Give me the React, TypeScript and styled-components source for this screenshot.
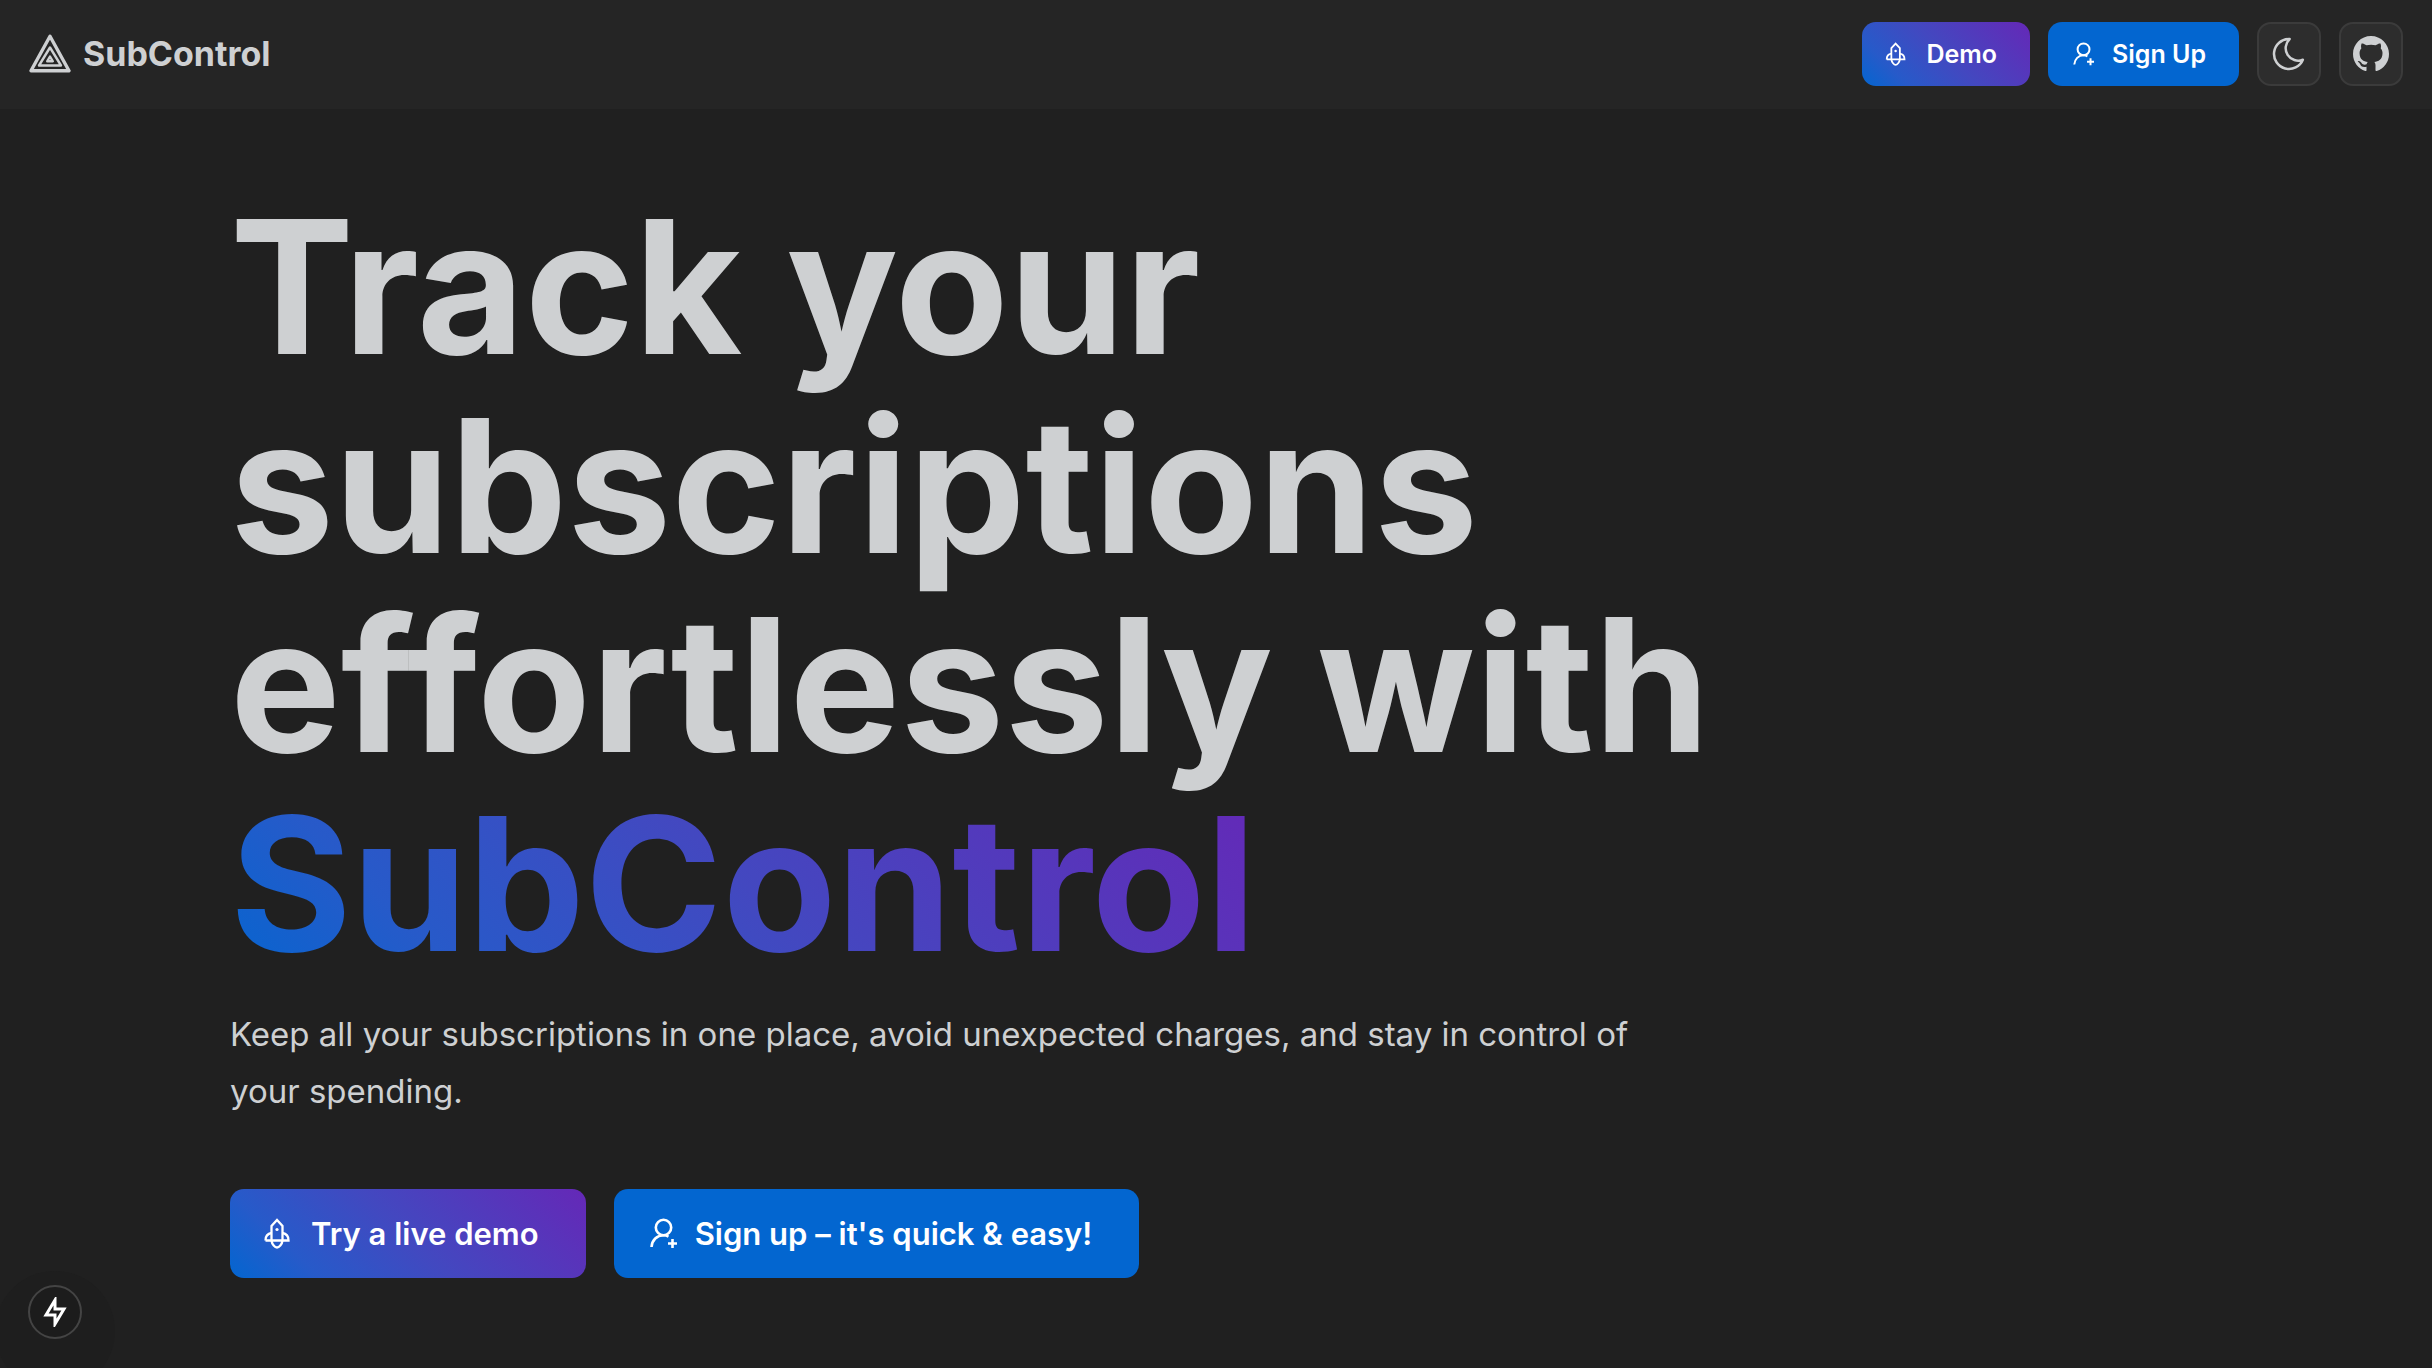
import React from 'react';
import styled, { createGlobalStyle, css } from 'styled-components';

const Global = createGlobalStyle`
  *, *::before, *::after { box-sizing: border-box; }
  body {
    margin: 0;
    background: #202020;
    color: #ced0d2;
    font-family: Inter, "Liberation Sans", sans-serif;
    -webkit-font-smoothing: antialiased;
  }
`;

const Page = styled.div`
  min-height: 100vh;
`;

const Header = styled.header`
  display: flex;
  align-items: center;
  justify-content: space-between;
  padding: 22px 29px 23px;
  background: #252525;
`;

const Brand = styled.a`
  display: flex;
  align-items: center;
  gap: 12px;
  color: inherit;
  text-decoration: none;
  font-size: 34px;
  line-height: 44px;
  font-weight: 700;
`;

const Actions = styled.nav`
  display: flex;
  gap: 18px;
`;

const gradient = 'linear-gradient(45deg, #0366d0 0%, #275ac9 20%, #4348c0 50%, #6528b7 100%)';

const Button = styled.button<{ $gradient?: boolean; $large?: boolean }>`
  display: flex;
  align-items: center;
  border: 0;
  border-radius: 14px;
  color: #fff;
  font-family: inherit;
  font-weight: 600;
  cursor: pointer;
  background: ${(p) => (p.$gradient ? gradient : '#0366d0')};
  ${(p) =>
    p.$large
      ? css`
          height: 89px;
          padding: 0 47px 0 32px;
          gap: 18px;
          font-size: 31px;
          svg { width: 31px; height: 31px; }
        `
      : css`
          height: 64px;
          padding: 0 33px 0 22px;
          gap: 18px;
          font-size: 25px;
          svg { width: 24px; height: 24px; }
        `}
`;

const IconButton = styled.button`
  display: grid;
  place-items: center;
  width: 64px;
  height: 64px;
  padding: 0;
  border: 2px solid #3b3b3b;
  border-radius: 14px;
  background: #2d2d2d;
  color: #ced0d2;
  cursor: pointer;
`;

const Hero = styled.main`
  padding: 78px 230px 0;
`;

const Title = styled.h1`
  margin: 0;
  max-width: 1520px;
  font-size: 186px;
  line-height: 199px;
  font-weight: 700;
`;

const Highlight = styled.span`
  color: transparent;
  background: ${gradient};
  -webkit-background-clip: text;
  background-clip: text;
`;

const Lead = styled.p`
  margin: 23px 0 0;
  max-width: 1430px;
  font-size: 33px;
  line-height: 57px;
`;

const Controls = styled.div`
  display: flex;
  gap: 28px;
  margin-top: 69px;
`;

const DevBadge = styled.button`
  position: fixed;
  left: 28px;
  bottom: 29px;
  display: grid;
  place-items: center;
  width: 54px;
  height: 54px;
  padding: 0;
  border: 2px solid #444;
  border-radius: 50%;
  background: #1c1c1c;
  color: #fff;
  box-shadow: 0 19px 0 33px #1e1e1e;
`;

const Logo = () => (
  <svg width="42" height="42" viewBox="0 0 42 42" fill="none" stroke="currentColor" strokeLinejoin="round" aria-hidden="true">
    <path d="M21 3.200L40 37.700H2Z" strokeWidth="3.400" />
    <path d="M21 14.500L32 32.500H10Z" strokeWidth="2.400" />
    <path d="M21 23.500L23.800 28.300H18.200Z" strokeWidth="2.400" />
  </svg>
);

const Rocket = () => (
  <svg viewBox="0 0 31 31" fill="none" stroke="currentColor" strokeWidth="2.300" aria-hidden="true">
    <path d="M9.500 22V8L15 2L20.500 8V22" />
    <path d="M3.500 22.500H26.500C26.500 18 24 15.500 20.500 15M3.500 22.500C3.500 18 6 15.500 9.500 15" />
    <path d="M9.500 22.500C10 26.500 13 29.500 15 29.500S20 26.500 20.500 22.500" />
    <circle cx="15" cy="11.500" r="1.600" fill="currentColor" stroke="none" />
  </svg>
);

const UserAdd = () => (
  <svg viewBox="0 0 31 31" fill="none" stroke="currentColor" strokeWidth="2.600" aria-hidden="true">
    <circle cx="17.500" cy="9.500" r="7.700" />
    <path d="M5.500 29C6 22 11 17.200 17.500 17.200C19.500 17.200 21 17.700 22.500 18.600M22 25.500H31M26.500 21V30" />
  </svg>
);

const Moon = () => (
  <svg width="40" height="40" viewBox="0 0 24 24" fill="none" stroke="currentColor" strokeWidth="1.500" strokeLinejoin="round" aria-hidden="true">
    <path d="M12 3c.132 0 .263 0 .393 0a7.500 7.500 0 0 0 7.920 12.446a9 9 0 1 1 -8.313 -12.454z" />
  </svg>
);

const GitHub = () => (
  <svg width="36" height="36" viewBox="0 0 16 16" fill="currentColor" aria-hidden="true">
    <path d="M8 0C3.580 0 0 3.580 0 8c0 3.540 2.290 6.530 5.470 7.590.4.070.55-.17.55-.38 0-.19-.01-.82-.01-1.490-2.010.37-2.530-.49-2.690-.94-.09-.23-.48-.94-.82-1.130-.28-.15-.68-.52-.01-.53.63-.01 1.080.58 1.230.82.72 1.210 1.870.87 2.330.66.07-.52.28-.87.51-1.070-1.780-.2-3.640-.89-3.640-3.950 0-.87.31-1.590.82-2.150-.08-.2-.36-1.020.08-2.120 0 0 .67-.21 2.200.82.64-.18 1.320-.27 2-.27s1.360.09 2 .27c1.530-1.040 2.200-.82 2.200-.82.44 1.100.16 1.920.08 2.120.51.56.82 1.270.82 2.150 0 3.070-1.870 3.750-3.650 3.950.29.25.54.73.54 1.480 0 1.070-.01 1.930-.01 2.200 0 .21.15.46.55.38A8.010 8.010 0 0 0 16 8c0-4.420-3.580-8-8-8z" />
  </svg>
);

const Bolt = () => (
  <svg width="28" height="30" viewBox="0 0 28 30" fill="none" stroke="currentColor" strokeWidth="3" aria-hidden="true">
    <path d="M14 3L5 18H14V27L23 12H14Z" />
  </svg>
);

export default function App() {
  return (
    <Page>
      <Global />
      <Header>
        <Brand href="#"><Logo />SubControl</Brand>
        <Actions>
          <Button $gradient><Rocket />Demo</Button>
          <Button><UserAdd />Sign Up</Button>
          <IconButton aria-label="Toggle colour scheme"><Moon /></IconButton>
          <IconButton aria-label="GitHub"><GitHub /></IconButton>
        </Actions>
      </Header>
      <Hero>
        <Title>Track your subscriptions effortlessly with <Highlight>SubControl</Highlight></Title>
        <Lead>Keep all your subscriptions in one place, avoid unexpected charges, and stay in control of your spending.</Lead>
        <Controls>
          <Button $gradient $large><Rocket />Try a live demo</Button>
          <Button $large><UserAdd />Sign up – it's quick &amp; easy!</Button>
        </Controls>
      </Hero>
      <DevBadge aria-label="Open developer tools"><Bolt /></DevBadge>
    </Page>
  );
}
